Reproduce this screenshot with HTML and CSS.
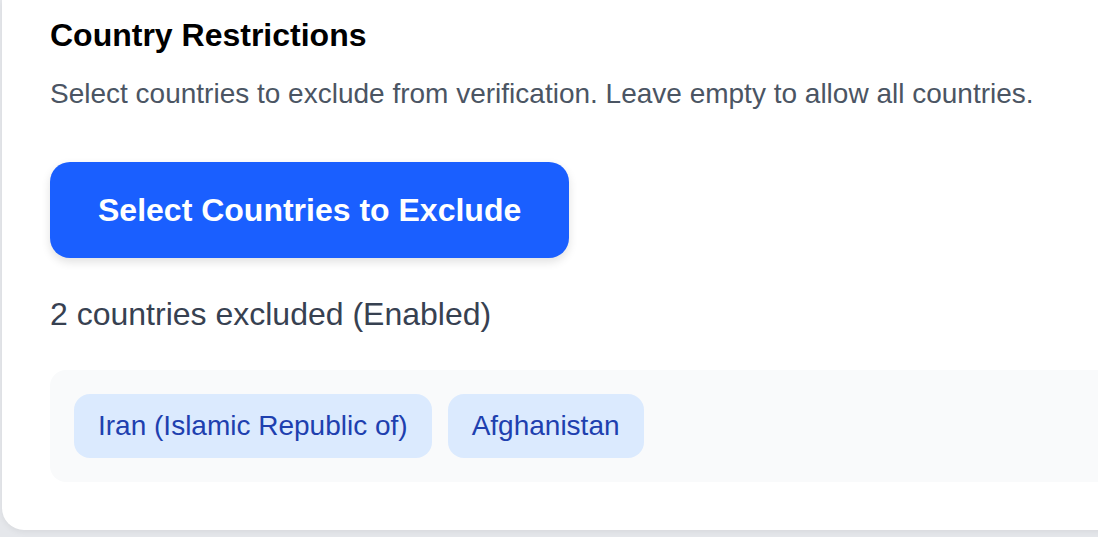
FILE: index.html
```html
<!DOCTYPE html>
<html>
<head>
<meta charset="utf-8">
<link rel="stylesheet" href="styles.css">
</head>
<body>
<div class="page">
  <section class="card">
    <h2 class="title">Country Restrictions</h2>
    <p class="desc">Select countries to exclude from verification. Leave empty to allow all countries.</p>
    <button class="btn">Select Countries to Exclude</button>
    <p class="count">2 countries excluded (Enabled)</p>
    <div class="chips">
      <span class="chip">Iran (Islamic Republic of)</span>
      <span class="chip">Afghanistan</span>
    </div>
  </section>
</div>
</body>
</html>
```
FILE: styles.css
```css
html, body {
  margin: 0;
  padding: 0;
  background: #e5e7eb;
  font-family: "Liberation Sans", Arial, sans-serif;
  overflow: hidden;
}
.page {
  padding-left: 2px;
  height: 537px;
}
.card {
  background: #ffffff;
  border-radius: 0 0 0 22px;
  padding: 16px 0 48px 48px;
  box-shadow: 0 2px 6px rgba(0,0,0,0.06);
  width: 1200px;
  display: flex;
  flex-direction: column;
  align-items: flex-start;
}
.title {
  margin: 0;
  font-size: 32px;
  font-weight: 700;
  line-height: 38px;
  color: #000000;
}
.desc {
  margin: 20px 0 0 0;
  font-size: 28px;
  line-height: 40px;
  color: #4b5563;
}
.btn {
  margin-top: 48px;
  border: none;
  background: #1a5fff;
  color: #ffffff;
  font-family: inherit;
  font-size: 32px;
  font-weight: 700;
  line-height: 48px;
  padding: 24px 48px;
  border-radius: 20px;
  box-shadow: 0 4px 10px rgba(0,0,0,0.12);
}
.count {
  margin: 36px 0 0 0;
  font-size: 32px;
  line-height: 40px;
  color: #374151;
}
.chips {
  margin-top: 36px;
  align-self: stretch;
  background: #f9fafb;
  border-radius: 16px;
  padding: 24px;
  display: flex;
  gap: 16px;
}
.chip {
  background: #dbeafe;
  color: #1e40af;
  font-size: 28px;
  line-height: 32px;
  padding: 16px 24px;
  border-radius: 16px;
}
```
